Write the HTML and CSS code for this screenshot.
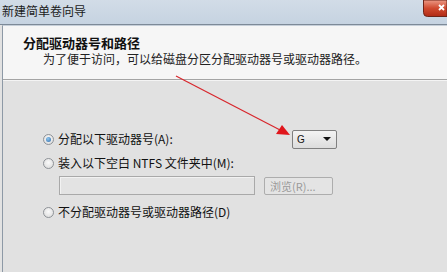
FILE: index.html
```html
<!DOCTYPE html>
<html lang="zh-CN">
<head>
<meta charset="utf-8">
<link rel="stylesheet" href="styles.css">
</head>
<body>
<div class="window">
  <div class="titlebar">
    <span class="title">新建简单卷向导</span>
    <svg class="close" width="24" height="17" viewBox="0 0 24 17">
      <defs>
        <linearGradient id="cg" x1="0" y1="0" x2="0" y2="1">
          <stop offset="0" stop-color="#ec9a86"/>
          <stop offset="0.5" stop-color="#d04a2f"/>
          <stop offset="1" stop-color="#b02a15"/>
        </linearGradient>
      </defs>
      <path d="M0.5 0 V12.5 Q0.5 16.5 4.5 16.5 H24 V0 Z" fill="url(#cg)" stroke="#6e2418" stroke-width="1"/>
      <path d="M16 5 L21 10 M21 5 L16 10" stroke="#fff" stroke-width="1.8"/>
    </svg>
  </div>
  <div class="frame">
    <div class="header">
      <div class="h-title">分配驱动器号和路径</div>
      <div class="h-sub">为了便于访问，可以给磁盘分区分配驱动器号或驱动器路径。</div>
    </div>
    <div class="content">
      <div class="row row-first">
        <span class="radio checked"></span>
        <span class="label">分配以下驱动器号(A):</span>
        <span class="spacer"></span>
        <span class="combo"><span class="combo-val">G</span><span class="combo-arrow"></span></span>
      </div>
      <div class="row">
        <span class="radio"></span>
        <span class="label">装入以下空白 NTFS 文件夹中(M):</span>
      </div>
      <div class="row path-row">
        <span class="textbox"></span>
        <span class="btn">浏览(R)...</span>
      </div>
      <div class="row">
        <span class="radio"></span>
        <span class="label">不分配驱动器号或驱动器路径(D)</span>
      </div>
    </div>
  </div>
  <svg class="arrow" width="447" height="272" viewBox="0 0 447 272">
    <line x1="176" y1="76" x2="282" y2="131" stroke="#d8262c" stroke-width="1.2"/>
    <polygon points="290,135 276,134 282,125" fill="#e0161c"/>
  </svg>
</div>
</body>
</html>
```
FILE: styles.css
```css
* { box-sizing: border-box; }
html, body { margin: 0; padding: 0; }
body {
  width: 447px;
  height: 272px;
  overflow: hidden;
  font-family: "Noto Sans CJK SC", "Liberation Sans", sans-serif;
  font-size: 12px;
  color: #111;
  background: #e2e2e2;
}
.window {
  position: relative;
  width: 447px;
  height: 272px;
  display: flex;
  flex-direction: column;
}
.titlebar {
  height: 25px;
  flex: none;
  display: flex;
  align-items: flex-start;
  justify-content: space-between;
  background: linear-gradient(#d2dce7, #c6d3e1);
  border-bottom: 1px solid #7d8a98;
}
.title {
  padding: 3px 0 0 2px;
  font-size: 12px;
  line-height: 16px;
  color: #1b1b1b;
}
.close {
  display: block;
  flex: none;
}
.frame {
  flex: 1;
  display: flex;
  flex-direction: column;
  margin-left: 2px;
  border-left: 1px solid #8d99a6;
  border-top: 1px solid #c6cfd9;
}
.header {
  height: 54px;
  flex: none;
  background: #f6f6f6;
  border-bottom: 1px solid #a4a4a4;
  padding: 9px 0 0 20px;
}
.h-title {
  font-weight: bold;
  font-size: 13px;
  line-height: 16px;
  color: #111;
}
.h-sub {
  padding-left: 20px;
  font-size: 12px;
  line-height: 15px;
  color: #222;
}
.content {
  flex: 1;
  background: #e1e1e1;
  border-top: 1px solid #f4f4f4;
  padding: 48px 0 0 40px;
}
.row {
  display: flex;
  align-items: center;
  height: 18px;
  width: 294px;
}
.row + .row { margin-top: 5px; }
.row-first { height: 20px; }
.label { margin-left: 4px; line-height: 16px; }
.spacer { flex: 1; }
.radio {
  width: 11px;
  height: 11px;
  border-radius: 50%;
  border: 1px solid #8e9297;
  background: radial-gradient(circle at 50% 40%, #fafafa, #d8d8d8);
  position: relative;
  flex: none;
}
.radio.checked::after {
  content: "";
  position: absolute;
  left: 2px;
  top: 2px;
  width: 5px;
  height: 5px;
  border-radius: 50%;
  background: radial-gradient(circle at 40% 35%, #8fc7f0, #2e6aa8);
}
.combo {
  width: 45px;
  height: 19px;
  border: 1px solid #7f7f7f;
  border-radius: 2px;
  background: linear-gradient(#f3f3f3, #dcdcdc);
  display: flex;
  align-items: center;
  justify-content: space-between;
  padding: 0 5px 0 4px;
}
.combo-val { font-family: "Liberation Sans", sans-serif; font-size: 10px; }
.combo-arrow {
  width: 0;
  height: 0;
  border-left: 4px solid transparent;
  border-right: 4px solid transparent;
  border-top: 4px solid #111;
}
.path-row { padding-left: 16px; height: 19px; width: auto; margin-top: 4px !important; }
.textbox {
  width: 196px;
  height: 19px;
  border: 1px solid #a9a9a9;
  background: #e3e3e3;
  box-shadow: inset 1px 1px 0 #f2f2f2;
}
.btn {
  margin-left: 9px;
  width: 69px;
  height: 18px;
  border: 1px solid #adadad;
  border-radius: 2px;
  background: #e4e4e4;
  color: #9a9a9a;
  font-size: 11px;
  line-height: 16px;
  padding-left: 5px;
}
.path-row + .row { margin-top: 8px !important; }
.arrow {
  position: absolute;
  left: 0;
  top: 0;
  pointer-events: none;
}
```
